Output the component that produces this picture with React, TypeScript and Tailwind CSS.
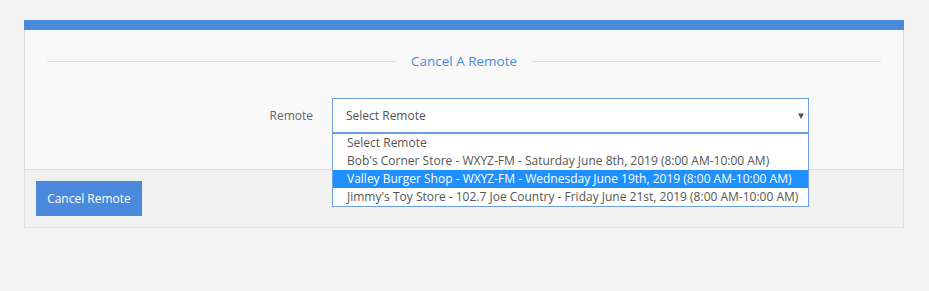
import React from 'react';

const remotes = [
  'Select Remote',
  "Bob's Corner Store - WXYZ-FM - Saturday June 8th, 2019 (8:00 AM-10:00 AM)",
  'Valley Burger Shop - WXYZ-FM - Wednesday June 19th, 2019 (8:00 AM-10:00 AM)',
  "Jimmy's Toy Store - 102.7 Joe Country - Friday June 21st, 2019 (8:00 AM-10:00 AM)",
];

export default function App() {
  const highlighted = 2;

  return (
    <div className="min-h-[291px] bg-[#f3f3f3] pt-5 pl-6 pr-[25px] font-['Open_Sans',sans-serif]">
      <div className="border border-t-0 border-[#dddddd] bg-[#f9f9f9]">
        <div className="-mx-px h-[10px] bg-[#4a89dc]" />

        {/* Body */}
        <div className="px-[22px] pt-[22px] pb-[36px]">
          <div className="flex h-[18px] items-center gap-[15px]">
            <div className="h-px flex-1 bg-[#dddddd]" />
            <h3 className="text-[13.5px] leading-[18px] text-[#4a89dc]">Cancel A Remote</h3>
            <div className="h-px flex-1 bg-[#dddddd]" />
          </div>

          <div className="mt-[28px] flex items-center">
            <label className="w-[266px] text-right text-[12px] text-[#666666]">Remote</label>
            <div className="relative ml-[19px] w-[477px]">
              <div className="flex h-[35px] items-center justify-between border border-[#6c9ee3] bg-white pl-[13px] pr-[4px]">
                <span className="text-[12px] text-[#555555]">Select Remote</span>
                <svg width="6" height="6" viewBox="0 0 6 6" className="text-[#555555]">
                  <path d="M0 0.5h6L3 6z" fill="currentColor" />
                </svg>
              </div>
              <ul className="absolute left-0 right-0 top-full z-10 border border-[#6c9ee3] bg-white">
                {remotes.map((r, i) => (
                  <li
                    key={r}
                    className={
                      'h-[18px] whitespace-nowrap pl-[14px] text-[12px] leading-[18px] ' +
                      (i === highlighted ? 'bg-[#1e90ff] text-white' : 'text-[#555555]')
                    }
                  >
                    {r}
                  </li>
                ))}
              </ul>
            </div>
          </div>
        </div>

        {/* Footer */}
        <div className="border-t border-[#dddddd] bg-[#f1f1f1] p-[11px]">
          <button className="h-[35px] w-[106px] bg-[#4a89dc] text-[12px] text-white">Cancel Remote</button>
        </div>
      </div>
    </div>
  );
}
